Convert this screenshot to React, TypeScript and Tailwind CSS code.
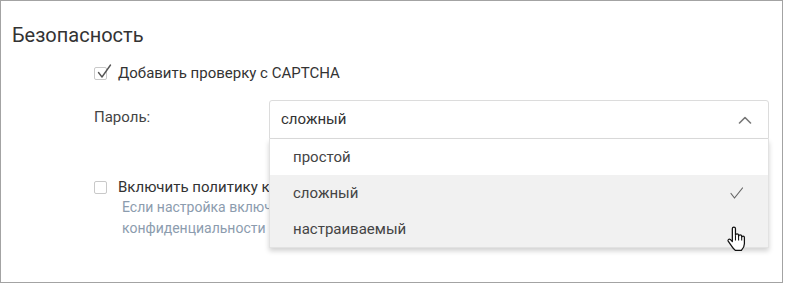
import { useState } from "react";

const options = ["простой", "сложный", "настраиваемый"];

function Checkbox({ checked }: { checked: boolean }) {
  return (
    <span className="relative mr-[11px] inline-block h-[13px] w-[13px] shrink-0 rounded-[2px] border border-[#c9c9c9] bg-white">
      {checked && (
        <svg
          className="absolute -top-[4px] left-[1px]"
          width="16"
          height="16"
          viewBox="0 0 16 16"
          fill="none"
        >
          <polyline
            points="2.5,8.5 6,13 14.5,1"
            stroke="#555"
            strokeWidth="1.4"
            strokeLinecap="round"
            strokeLinejoin="round"
          />
        </svg>
      )}
    </span>
  );
}

function HandCursor() {
  return (
    <svg width="21" height="26" viewBox="0 0 20 25" fill="none">
      <path
        d="M6 13V2.5a1.5 1.5 0 0 1 3 0V9a1.5 1.5 0 0 1 3 0v1a1.5 1.5 0 0 1 3 0v1a1.3 1.3 0 0 1 2.6 0V17c0 3-1.5 5-3 6.5H9c-1.5-1-3-3-5-6l-2-3a1.3 1.3 0 0 1 2-1.6L6 15Z"
        fill="#fff"
        stroke="#111"
        strokeWidth="1.2"
        strokeLinejoin="round"
      />
      <path d="M9 9.5V14M12 10.5V14M15 11.5V14" stroke="#111" strokeWidth="1" />
    </svg>
  );
}

export default function App() {
  const [value] = useState("сложный");

  return (
    <div className="h-[283px] w-[785px] bg-white font-['Roboto',sans-serif] text-[#333]">
      <div className="h-[283px] w-[783px] border border-[#a3a3a3] px-[11px] pt-[22px]">
        <h2 className="text-[20px] leading-6 text-[#333]">Безопасность</h2>

        <div className="mt-4 flex h-5 items-center pl-[82px] text-[15px]">
          <Checkbox checked />
          <span>Добавить проверку с CAPTCHA</span>
        </div>

        <div className="mt-[17px] flex pl-[82px] text-[15px]">
          <div className="w-[175px] pt-[7px] leading-5 text-[#444]">Пароль:</div>
          <div className="relative w-[500px]">
            <div className="flex h-[39px] items-center justify-between rounded-t-[3px] border border-[#dcdcdc] bg-white pl-[11px] pr-[16px]">
              <span className="text-[#333]">{value}</span>
              <svg width="14" height="8" viewBox="0 0 14 8" fill="none">
                <polyline
                  points="1.5,7 7,1.5 12.5,7"
                  stroke="#777"
                  strokeWidth="1.6"
                  strokeLinecap="round"
                  strokeLinejoin="round"
                />
              </svg>
            </div>
            <ul className="absolute left-0 right-0 top-full z-10 border-x border-b border-[#e2e2e2] bg-white shadow-[0_3px_5px_rgba(0,0,0,0.18)]">
              {options.map((o, i) => (
                <li
                  key={o}
                  className={`flex h-9 items-center justify-between pl-[23px] pr-[24px] text-[#444] ${
                    i > 0 ? "bg-[#f1f1f1]" : "bg-white"
                  }`}
                >
                  <span>{o}</span>
                  {o === value && (
                    <svg width="14" height="12" viewBox="0 0 14 12" fill="none">
                      <polyline
                        points="1,6.5 4.5,11 12.5,1"
                        stroke="#666"
                        strokeWidth="1.2"
                        strokeLinecap="round"
                        strokeLinejoin="round"
                      />
                    </svg>
                  )}
                  {i === 2 && (
                    <span className="absolute bottom-[-5px] right-[21px]">
                      <HandCursor />
                    </span>
                  )}
                </li>
              ))}
            </ul>
          </div>
        </div>

        <div className="mt-[38px] pl-[82px] text-[15px]">
          <div className="flex h-5 items-center">
            <Checkbox checked={false} />
            <span>Включить политику конфиденциальности</span>
          </div>
          <p className="pl-[28px] text-[14px] leading-[21px] text-[#8c9cae]">
            Если настройка включена, пользователи должны принять политику
            <br />
            конфиденциальности при регистрации.
          </p>
        </div>
      </div>
    </div>
  );
}
